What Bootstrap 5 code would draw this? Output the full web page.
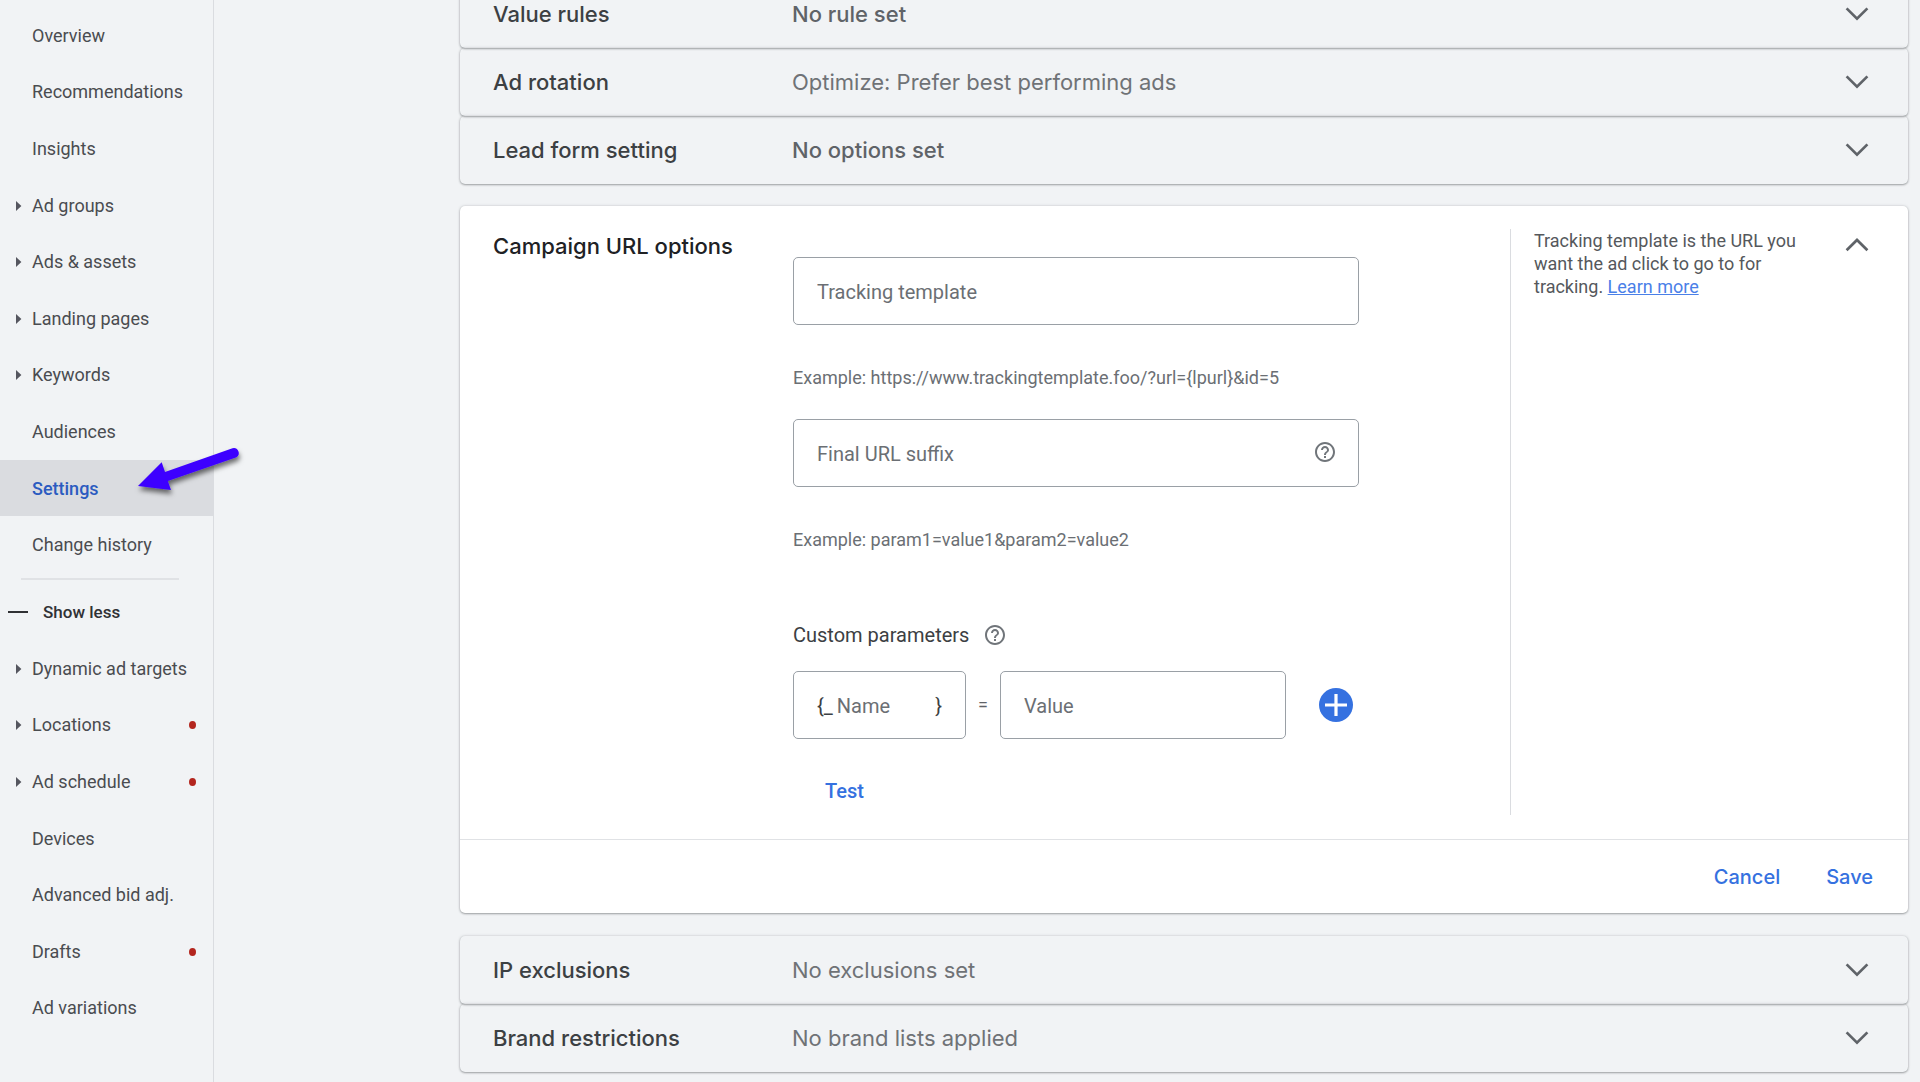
<!DOCTYPE html>
<html lang="en">
<head>
<meta charset="utf-8">
<meta name="viewport" content="width=device-width, initial-scale=1">
<title>Campaign settings</title>
<link href="https://cdn.jsdelivr.net/npm/bootstrap@5.3.0/dist/css/bootstrap.min.css" rel="stylesheet">
<style>
  body { background: #f1f3f5; color: #3c4043; font-family: Roboto, "Liberation Sans", sans-serif; font-size: 20px; line-height: 24px; overflow: hidden; }

  /* side navigation */
  .side-nav { width: 214px; min-height: 100vh; border-right: 1px solid #dadce0; padding-top: 7px; font-size: 18px; }
  .side-nav a { color: #4a4c50; text-decoration: none; }
  .nav-group { height: 566px; }
  .nav-group.more { height: 396px; }
  .nav-group li { padding: 1px 17px 0 16px; position: relative; }
  .nav-group li.selected { background: #dadce0; }
  .nav-group li.selected a { color: #2b5bc0; font-weight: 500; }
  .caret { width: 16px; flex: none; line-height: 0; }
  .alert-dot { width: 7px; height: 8px; border-radius: 50%; background: #b3261e; }
  .nav-rule { height: 2px; margin: 5px 34px 0 21px; background: #e0e2e5; }
  .show-less { height: 60px; padding: 4px 8px 0; gap: 15px; font-size: 17px; font-weight: 500; color: #303134; background: none; border: 0; }
  .pointer-arrow { position: absolute; left: 128px; top: -20px; z-index: 2; }

  /* settings panels */
  .settings { padding: 0 12px 0 246px; margin-top: -20px; }
  .panel { background: none; border-radius: 5px; box-shadow: 0 1px 2px rgba(60,64,67,.4), 0 0 3px rgba(60,64,67,.22); }
  .panel-head { height: 68px; padding: 0 39px 0 33px; font-family: Inter, Roboto, sans-serif; font-size: 22px; text-align: left; border: 0; width: 100%; color: inherit; }
  .title-col { width: 299px; flex: none; font-family: Inter, Roboto, sans-serif; font-size: 22px; font-weight: 500; }
  .value-text { color: #6f7276; font-weight: 400; }
  .value-text.strong { color: #5f6368; font-weight: 500; }
  .panel.editor { background: #fff; margin: 22px 0 23px; }
  .editor-body { padding: 23px 0 24px 33px; min-height: 633px; }
  .editor-body .title-col { color: #202124; padding-top: 5px; width: 300px; }
  .form-col { width: 566px; padding-top: 28px; }
  .field { height: 68px; border: 1px solid #9aa0a6; border-radius: 5px; background: #fff; padding: 1px 23px 0; }
  .field input { border: 0; outline: 0; background: none; padding: 0; min-width: 0; color: #3c4043; }
  .field input::placeholder { color: #6b6f74; opacity: 1; }
  .hint { font-size: 18px; color: #6b6f74; line-height: 24px; margin: 41px 0 29px; }
  .custom-head { margin: 71px 0 24px; }
  .name-field { width: 173px; }
  .value-field { width: 286px; }
  .equals { width: 34px; text-align: center; font-size: 18px; color: #5f6368; }
  .plain-btn { border: 0; background: none; padding: 0; line-height: 0; }
  .add-btn { margin-right: 6px; }
  .text-btn { border: 0; background: none; color: #3571e0; font-weight: 500; padding: 8px; }
  .test-btn { margin-top: 32px; }
  .help-col { width: 398px; border-left: 1px solid #dadce0; padding: 0 39px 0 23px; }
  .help-col p { font-size: 18px; line-height: 23px; color: #55585c; width: 268px; }
  .help-col a { color: #4a80e8; }
  .editor-foot { height: 74px; border-top: 1px solid #e0e2e5; padding: 0 27px; gap: 30px; }
  .editor-foot .text-btn { font-family: Inter, Roboto, sans-serif; }
</style>
<script src="https://cdn.jsdelivr.net/npm/bootstrap@5.3.0/dist/js/bootstrap.bundle.min.js" defer></script>
</head>
<body>
<svg class="d-none" xmlns="http://www.w3.org/2000/svg">
  <symbol id="i-down" viewBox="0 0 24 16"><path d="M1.6 2.4 12 12.6 22.4 2.4" fill="none" stroke="#5f6368" stroke-width="2.7"/></symbol>
  <symbol id="i-up" viewBox="0 0 24 16"><path d="M1.6 13.2 12 3 22.4 13.2" fill="none" stroke="#5f6368" stroke-width="2.7"/></symbol>
  <symbol id="i-caret" viewBox="0 0 6 10"><path d="M0 0 5.4 5 0 10z" fill="#55565f"/></symbol>
  <symbol id="i-help" viewBox="2 2 20 20"><path fill="#70757a" d="M11 18h2v-2h-2v2zm1-16C6.480 2 2 6.480 2 12s4.480 10 10 10 10-4.480 10-10S17.520 2 12 2zm0 18c-4.410 0-8-3.590-8-8s3.590-8 8-8 8 3.590 8 8-3.590 8-8 8zm0-14c-2.210 0-4 1.790-4 4h2c0-1.100.9-2 2-2s2 .9 2 2c0 2-3 1.750-3 5h2c0-2.250 3-2.500 3-5 0-2.210-1.790-4-4-4z"/></symbol>
</svg>

<div class="d-flex">
  <nav class="side-nav flex-shrink-0" aria-label="Campaign">
    <ul class="nav-group list-unstyled d-flex flex-column mb-0">
      <li class="d-flex align-items-center flex-fill"><span class="caret"></span><a href="#">Overview</a></li>
      <li class="d-flex align-items-center flex-fill"><span class="caret"></span><a href="#">Recommendations</a></li>
      <li class="d-flex align-items-center flex-fill"><span class="caret"></span><a href="#">Insights</a></li>
      <li class="d-flex align-items-center flex-fill"><span class="caret"><svg width="6" height="10"><use href="#i-caret"/></svg></span><a href="#">Ad groups</a></li>
      <li class="d-flex align-items-center flex-fill"><span class="caret"><svg width="6" height="10"><use href="#i-caret"/></svg></span><a href="#">Ads &amp; assets</a></li>
      <li class="d-flex align-items-center flex-fill"><span class="caret"><svg width="6" height="10"><use href="#i-caret"/></svg></span><a href="#">Landing pages</a></li>
      <li class="d-flex align-items-center flex-fill"><span class="caret"><svg width="6" height="10"><use href="#i-caret"/></svg></span><a href="#">Keywords</a></li>
      <li class="d-flex align-items-center flex-fill"><span class="caret"></span><a href="#">Audiences</a></li>
      <li class="d-flex align-items-center flex-fill selected"><span class="caret"></span><a href="#" aria-current="page">Settings</a>
        <svg class="pointer-arrow" width="124" height="66" viewBox="128 440 124 66" aria-hidden="true">
          <defs><filter id="soft" x="-20%" y="-20%" width="150%" height="160%"><feDropShadow dx="1" dy="4" stdDeviation="2.500" flood-color="#000" flood-opacity=".55"/></filter></defs>
          <g filter="url(#soft)" fill="#3c00ff"><path d="M138 486 161.700 462.300 165 472 232.500 448.300a5 5 0 0 1 4 9L167.800 481 171 490z"/></g>
        </svg>
      </li>
      <li class="d-flex align-items-center flex-fill"><span class="caret"></span><a href="#">Change history</a></li>
    </ul>
    <div class="nav-rule"></div>
    <button type="button" class="show-less d-flex align-items-center"><svg width="20" height="2"><path d="M0 1h20" stroke="#303134" stroke-width="2"/></svg><span>Show less</span></button>
    <ul class="nav-group more list-unstyled d-flex flex-column mb-0">
      <li class="d-flex align-items-center flex-fill"><span class="caret"><svg width="6" height="10"><use href="#i-caret"/></svg></span><a href="#">Dynamic ad targets</a></li>
      <li class="d-flex align-items-center flex-fill"><span class="caret"><svg width="6" height="10"><use href="#i-caret"/></svg></span><a href="#">Locations</a><span class="alert-dot ms-auto"></span></li>
      <li class="d-flex align-items-center flex-fill"><span class="caret"><svg width="6" height="10"><use href="#i-caret"/></svg></span><a href="#">Ad schedule</a><span class="alert-dot ms-auto"></span></li>
      <li class="d-flex align-items-center flex-fill"><span class="caret"></span><a href="#">Devices</a></li>
      <li class="d-flex align-items-center flex-fill"><span class="caret"></span><a href="#">Advanced bid adj.</a></li>
      <li class="d-flex align-items-center flex-fill"><span class="caret"></span><a href="#">Drafts</a><span class="alert-dot ms-auto"></span></li>
      <li class="d-flex align-items-center flex-fill"><span class="caret"></span><a href="#">Ad variations</a></li>
    </ul>
  </nav>

  <main class="settings flex-grow-1">
    <button type="button" class="panel panel-head d-flex align-items-center"><span class="title-col">Value rules</span><span class="value-text strong flex-grow-1">No rule set</span><svg width="24" height="16"><use href="#i-down"/></svg></button>
    <button type="button" class="panel panel-head d-flex align-items-center"><span class="title-col">Ad rotation</span><span class="value-text flex-grow-1">Optimize: Prefer best performing ads</span><svg width="24" height="16"><use href="#i-down"/></svg></button>
    <button type="button" class="panel panel-head d-flex align-items-center"><span class="title-col">Lead form setting</span><span class="value-text strong flex-grow-1">No options set</span><svg width="24" height="16"><use href="#i-down"/></svg></button>

    <section class="panel editor">
      <div class="editor-body d-flex">
        <div class="title-col">Campaign URL options</div>
        <form class="form-col">
          <div class="field d-flex align-items-center"><input type="text" class="flex-grow-1" placeholder="Tracking template" aria-label="Tracking template"></div>
          <p class="hint">Example: https://www.trackingtemplate.foo/?url={lpurl}&amp;id=5</p>
          <div class="field d-flex align-items-center"><input type="text" class="flex-grow-1" placeholder="Final URL suffix" aria-label="Final URL suffix"><button type="button" class="plain-btn pb-1" aria-label="Help on final URL suffix"><svg width="20" height="20"><use href="#i-help"/></svg></button></div>
          <p class="hint">Example: param1=value1&amp;param2=value2</p>
          <div class="custom-head d-flex align-items-center"><span>Custom parameters</span><button type="button" class="plain-btn ms-3" aria-label="Help on custom parameters"><svg width="20" height="20"><use href="#i-help"/></svg></button></div>
          <div class="d-flex align-items-center">
            <div class="field name-field d-flex align-items-center"><span class="me-1">{_</span><input type="text" class="flex-grow-1" placeholder="Name" aria-label="Name"><span>}</span></div>
            <span class="equals">=</span>
            <div class="field value-field d-flex align-items-center"><input type="text" class="flex-grow-1" placeholder="Value" aria-label="Value"></div>
            <button type="button" class="plain-btn add-btn ms-auto" aria-label="Add parameter"><svg width="34" height="34" viewBox="0 0 34 34"><circle cx="17" cy="17" r="17" fill="#3571e0"/><path d="M17 6v22M6 17h22" stroke="#fff" stroke-width="3.200"/></svg></button>
          </div>
          <button type="button" class="text-btn test-btn ms-4">Test</button>
        </form>
        <aside class="help-col ms-auto d-flex justify-content-between align-items-start">
          <p class="mb-0">Tracking template is the URL you want the ad click to go to for tracking. <a href="#">Learn more</a></p>
          <button type="button" class="plain-btn pt-2" aria-label="Collapse"><svg width="24" height="16"><use href="#i-up"/></svg></button>
        </aside>
      </div>
      <div class="editor-foot d-flex align-items-center justify-content-end">
        <button type="button" class="text-btn">Cancel</button>
        <button type="button" class="text-btn">Save</button>
      </div>
    </section>

    <button type="button" class="panel panel-head d-flex align-items-center"><span class="title-col">IP exclusions</span><span class="value-text flex-grow-1">No exclusions set</span><svg width="24" height="16"><use href="#i-down"/></svg></button>
    <button type="button" class="panel panel-head d-flex align-items-center"><span class="title-col">Brand restrictions</span><span class="value-text flex-grow-1">No brand lists applied</span><svg width="24" height="16"><use href="#i-down"/></svg></button>
  </main>
</div>
</body>
</html>
